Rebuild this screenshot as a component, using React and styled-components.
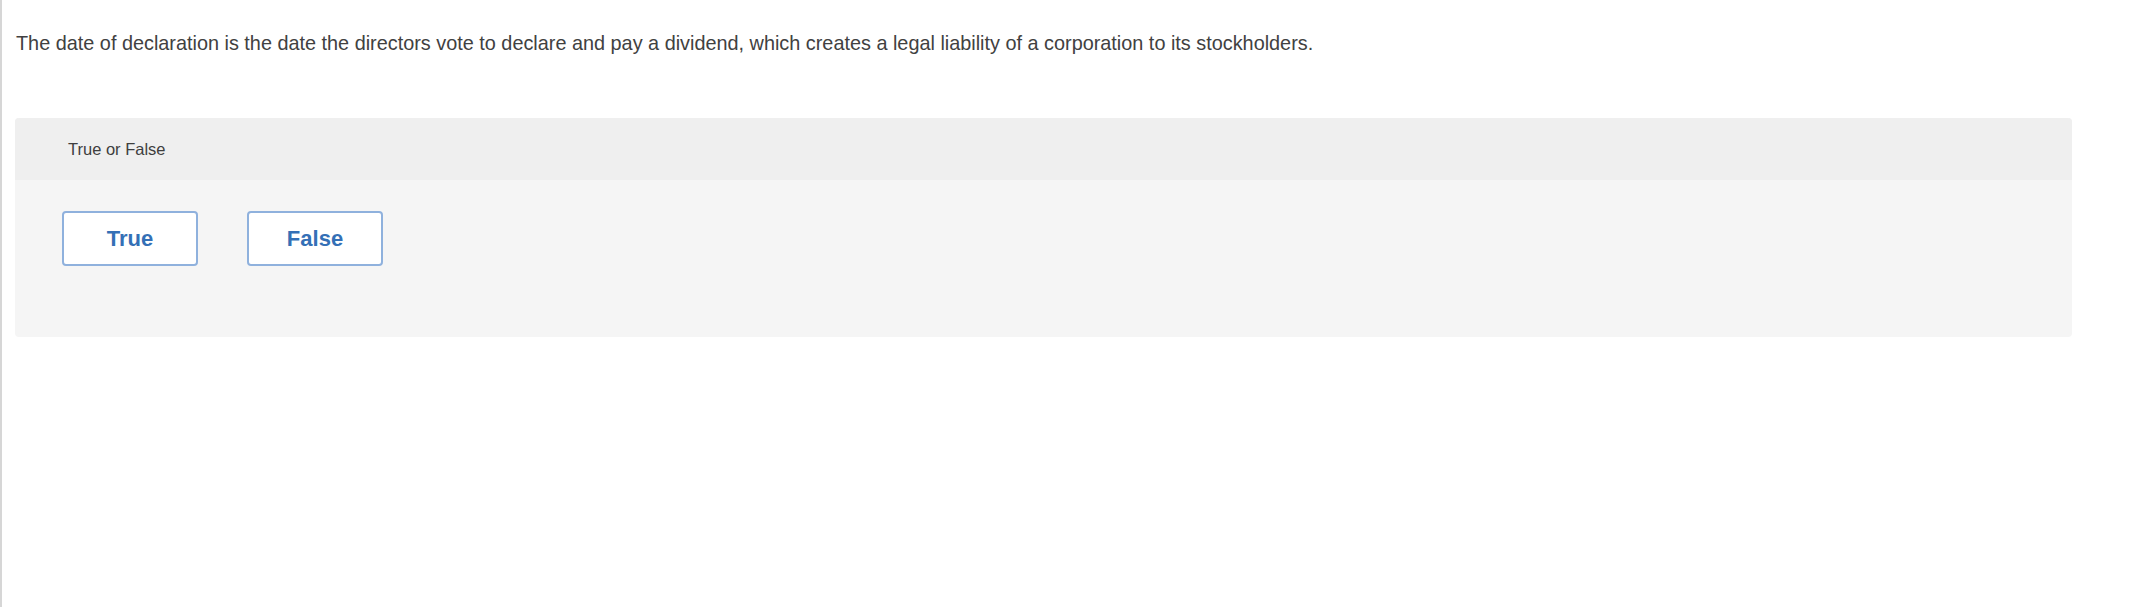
import React, { useState } from 'react';
import styled, { createGlobalStyle } from 'styled-components';

const GlobalStyle = createGlobalStyle`
  html, body {
    margin: 0;
    padding: 0;
    background: #fff;
  }
`;

const Page = styled.div`
  min-height: 607px;
  box-sizing: border-box;
  border-left: 2px solid #d6d6d6;
  padding: 29px 60px 0 13px;
  font-family: 'Liberation Sans', Arial, sans-serif;
`;

const Prompt = styled.p`
  margin: 0 0 0 1px;
  font-size: 19.85px;
  line-height: 28px;
  color: #414141;
`;

const Panel = styled.div`
  margin-top: 61px;
  border-radius: 4px;
  overflow: hidden;
  background: #f5f5f5;
`;

const PanelHeader = styled.div`
  display: flex;
  align-items: center;
  height: 62px;
  padding-left: 53px;
  background: #efefef;
  font-size: 16.5px;
  color: #3e3e3e;
`;

const Choices = styled.div`
  display: flex;
  gap: 49px;
  padding: 31px 0 71px 47px;
`;

const Choice = styled.button`
  width: 136px;
  height: 55px;
  box-sizing: border-box;
  border: 2px solid ${p => (p.$selected ? '#2f6db5' : '#8fb1dd')};
  border-radius: 4px;
  background: ${p => (p.$selected ? '#eaf1fa' : '#fff')};
  color: #3470b6;
  font-family: 'Liberation Sans', Arial, sans-serif;
  font-size: 22px;
  font-weight: 700;
  cursor: pointer;
  padding: 0;
`;

export default function App() {
  const [answer, setAnswer] = useState(null);

  return (
    <>
      <GlobalStyle />
      <Page>
        <Prompt>
          The date of declaration is the date the directors vote to declare and pay a dividend, which creates a legal liability of a corporation to its stockholders.
        </Prompt>
        <Panel>
          <PanelHeader>True or False</PanelHeader>
          <Choices>
            {['True', 'False'].map(label => (
              <Choice
                key={label}
                $selected={answer === label}
                onClick={() => setAnswer(label)}
              >
                {label}
              </Choice>
            ))}
          </Choices>
        </Panel>
      </Page>
    </>
  );
}
